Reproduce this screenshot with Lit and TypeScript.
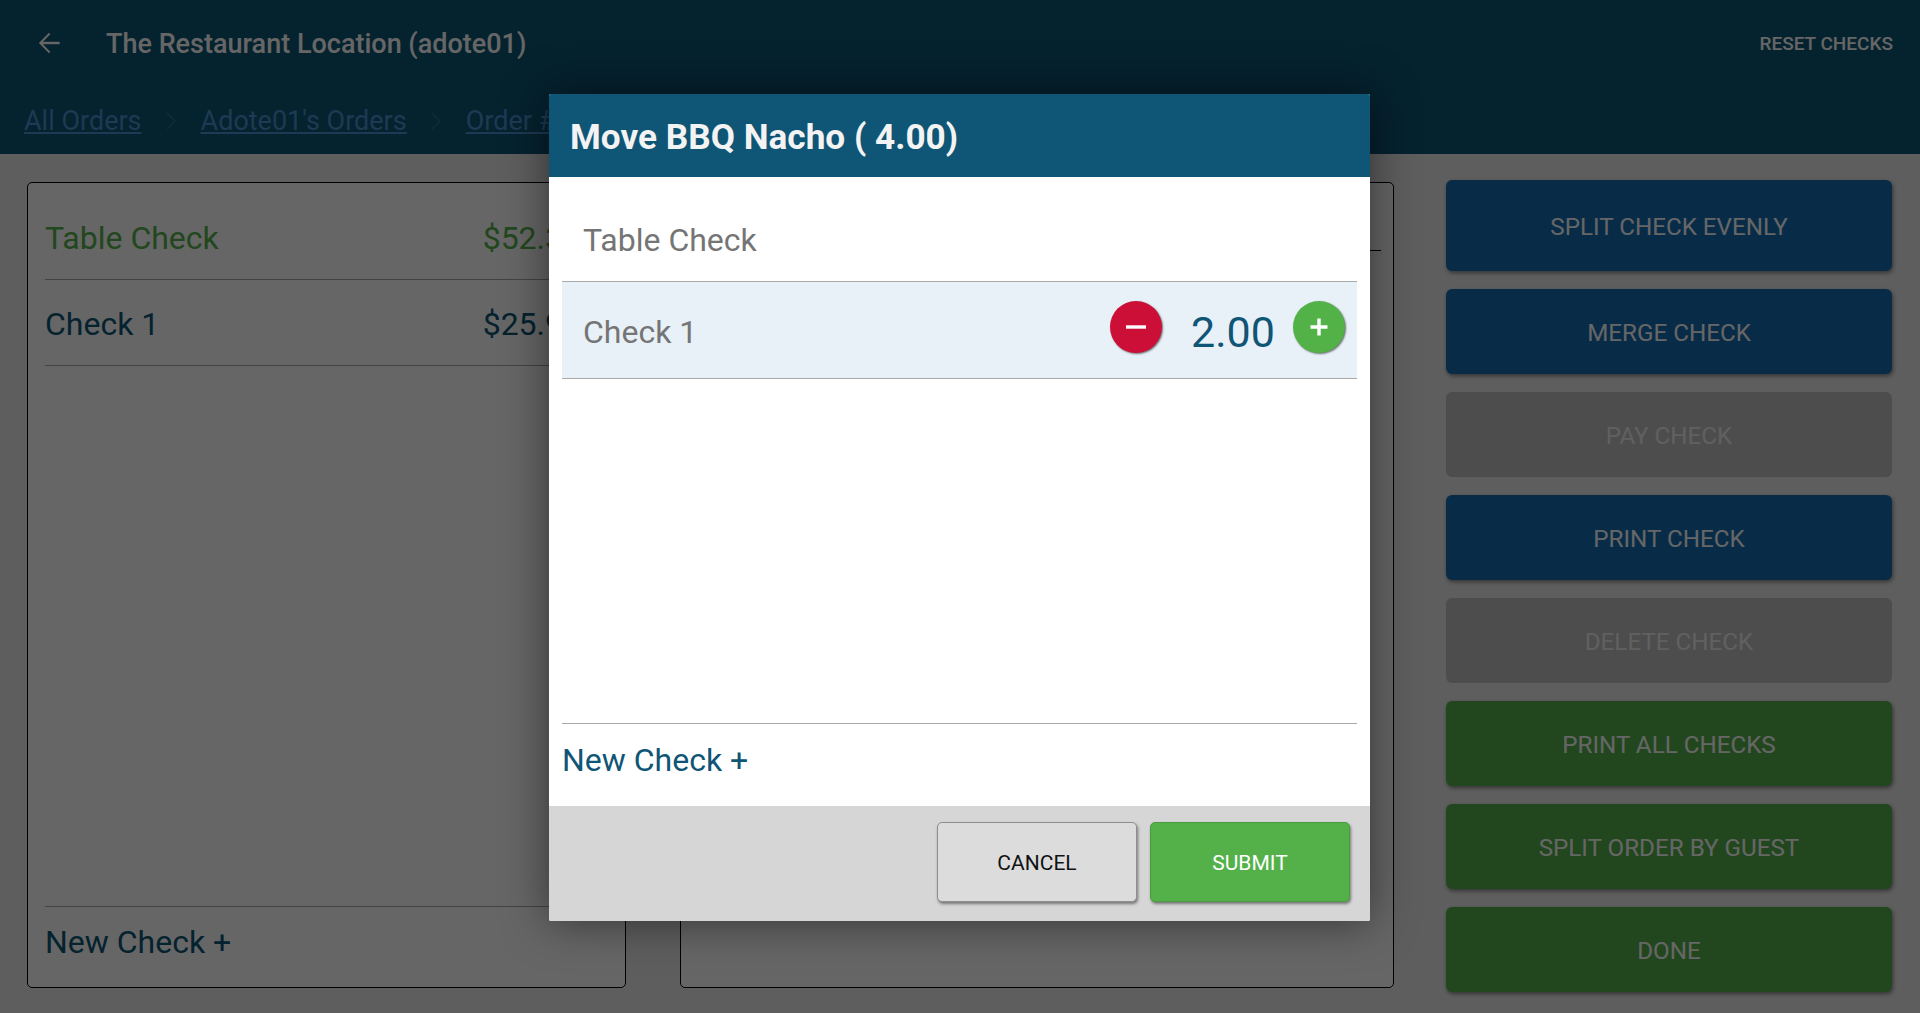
import { LitElement, html, css } from "lit";
import { customElement } from "lit/decorators.js";

@customElement("app-root")
export class AppRoot extends LitElement {
  static styles = css`
    :host { display: block; width: 1920px; height: 1013px; position: relative; overflow: hidden; font-family: Roboto, "Liberation Sans", sans-serif; background: #ebebeb; }
    .page { display: flex; flex-direction: column; height: 1013px; }
    .header { background: #0e5575; height: 154px; flex: none; display: flex; flex-direction: column; color: #fff; }
    .top { height: 86px; display: flex; align-items: center; padding: 0 27px 0 33px; }
    .back { width: 32px; height: 32px; fill: #fff; flex: none; }
    .title { font-size: 27px; font-weight: 500; margin-left: 41px; flex: 1; padding-top: 2px; }
    .reset { font-size: 19px; font-weight: 500; }
    .crumbs { display: flex; align-items: center; padding: 2px 0 0 24px; font-size: 27px; height: 68px; box-sizing: border-box; }
    .crumbs a { color: #4a8fd0; text-decoration: underline; }
    .chev { width: 16px; height: 28px; margin: 0 21.5px; fill: none; stroke: #1f6f9c; stroke-width: 1.5; }
    .main { flex: 1; display: flex; padding: 26px 28px 0 27px; align-items: flex-start; }
    .panel { margin-top: 2px; height: 806px; box-sizing: border-box; background: #fff; border: 1px solid #000; border-radius: 5px; display: flex; flex-direction: column; flex: none; }
    .p1 { width: 599px; margin-right: 54px; }
    .p2 { width: 714px; margin-right: 52px; padding: 0 12px 0 10px; }
    .checks { padding: 0 17px; flex: 1; }
    .check { height: 86px; box-sizing: border-box; display: flex; align-items: center; justify-content: space-between; border-bottom: 1px solid #a8a8a8; font-size: 32px; color: #0e5575; padding: 2px 27px 0 0; }
    .check:first-child { height: 97px; padding-top: 14px; }
    .check.green { color: #55b24b; }
    .newcheck { margin: 0 17px; border-top: 1px solid #a8a8a8; height: 81px; box-sizing: border-box; padding-bottom: 10px; display: flex; align-items: center; font-size: 32px; color: #0e5575; }
    .p2-head { height: 68px; box-sizing: border-box; border-bottom: 1px solid #000; }
    .actions { display: flex; flex-direction: column; gap: 18px; width: 446px; flex: none; }
    .act { height: 85px; box-sizing: border-box; padding-top: 2px; display: flex; align-items: center; justify-content: center; border-radius: 6px; color: #fff; font-size: 24.2px; box-shadow: 1px 2px 4px rgba(0,0,0,.45); }
    .act.first { height: 91px; }
    .blue { background: #146eb4; }
    .grey { background: #c0c0c0; color: #f0f0f0; box-shadow: none; }
    .grn { background: #55b24b; }
    .overlay { position: absolute; inset: 0; background: rgba(0,0,0,.6); }
    .modal { position: absolute; left: 549px; top: 94px; width: 821px; height: 827px; background: #fff; display: flex; flex-direction: column; border-radius: 2px; box-shadow: 0 0 45px rgba(0,0,0,.5); overflow: hidden; }
    .mtitle { height: 83px; box-sizing: border-box; padding: 3px 0 0 21px; flex: none; background: #0f5575; color: #f3f3f3; font-size: 35.2px; font-weight: 700; display: flex; align-items: center; }
    .mbody { flex: 1; display: flex; flex-direction: column; padding: 0 13px; }
    .list { flex: 1; }
    .row { display: flex; align-items: center; padding: 0 12px 0 21px; font-size: 32px; color: #757575; border-bottom: 1px solid #aaa; box-sizing: border-box; }
    .row.r1 { height: 105px; padding-top: 21px; }
    .row.r2 { height: 97px; background: #e8f0f8; padding-top: 4px; }
    .row .name { flex: 1; }
    .circ { width: 52px; height: 52px; border-radius: 50%; display: flex; align-items: center; justify-content: center; box-shadow: 1px 1px 2px rgba(0,0,0,.55); margin-top: -10px; }
    .circ svg { width: 22px; height: 22px; stroke: #fff; stroke-width: 3.4; }
    .red { background: #cc0f36; }
    .plus { background: #52b147; }
    .qty { font-size: 43px; color: #0f5575; width: 131px; box-sizing: border-box; padding-left: 11px; text-align: center; }
    .mnew { height: 83px; box-sizing: border-box; padding-bottom: 10px; border-top: 1px solid #aaa; display: flex; align-items: center; font-size: 32px; color: #0f5575; flex: none; }
    .mfoot { height: 115px; flex: none; background: #d6d6d6; display: flex; justify-content: flex-end; gap: 13px; padding: 16px 20px 0 0; box-sizing: border-box; }
    .btn { width: 200px; height: 80px; box-sizing: border-box; padding-top: 2px; border-radius: 5px; display: flex; align-items: center; justify-content: center; font-size: 21px; box-shadow: 1px 2px 3px rgba(0,0,0,.45); }
    .cancel { background: #dcdcdc; color: #111; border: 1px solid #8e8e8e; }
    .submit { background: #54b14a; color: #fff; border: 1px solid #4a9c41; }
  `;

  render() {
    const actions: [string, string][] = [
      ["SPLIT CHECK EVENLY", "blue first"],
      ["MERGE CHECK", "blue"],
      ["PAY CHECK", "grey"],
      ["PRINT CHECK", "blue"],
      ["DELETE CHECK", "grey"],
      ["PRINT ALL CHECKS", "grn"],
      ["SPLIT ORDER BY GUEST", "grn"],
      ["DONE", "grn"],
    ];
    return html`
      <div class="page">
        <div class="header">
          <div class="top">
            <svg class="back" viewBox="0 0 24 24"><path d="M20 11H7.4l5.6-5.6L12 4.4 4.4 12l7.6 7.6 1-1L7.4 13H20z"/></svg>
            <div class="title">The Restaurant Location (adote01)</div>
            <div class="reset">RESET CHECKS</div>
          </div>
          <div class="crumbs">
            <a>All Orders</a>
            <svg class="chev" viewBox="0 0 16 28"><path d="M4 6l8 8-8 8"/></svg>
            <a>Adote01's Orders</a>
            <svg class="chev" viewBox="0 0 16 28"><path d="M4 6l8 8-8 8"/></svg>
            <a>Order #</a>
          </div>
        </div>
        <div class="main">
          <div class="panel p1">
            <div class="checks">
              <div class="check green"><span>Table Check</span><span>$52.30</span></div>
              <div class="check"><span>Check 1</span><span>$25.95</span></div>
            </div>
            <div class="newcheck">New Check +</div>
          </div>
          <div class="panel p2"><div class="p2-head"></div></div>
          <div class="actions">
            ${actions.map(([t, c]) => html`<div class="act ${c}">${t}</div>`)}
          </div>
        </div>
      </div>
      <div class="overlay"></div>
      <div class="modal">
        <div class="mtitle">Move BBQ Nacho ( 4.00)</div>
        <div class="mbody">
          <div class="list">
            <div class="row r1"><span class="name">Table Check</span></div>
            <div class="row r2">
              <span class="name">Check 1</span>
              <div class="circ red"><svg viewBox="0 0 22 22"><path d="M1 11h20"/></svg></div>
              <div class="qty">2.00</div>
              <div class="circ plus"><svg viewBox="0 0 22 22"><path d="M11 2.500v17M2.500 11h17"/></svg></div>
            </div>
          </div>
          <div class="mnew">New Check +</div>
        </div>
        <div class="mfoot">
          <div class="btn cancel">CANCEL</div>
          <div class="btn submit">SUBMIT</div>
        </div>
      </div>
    `;
  }
}
